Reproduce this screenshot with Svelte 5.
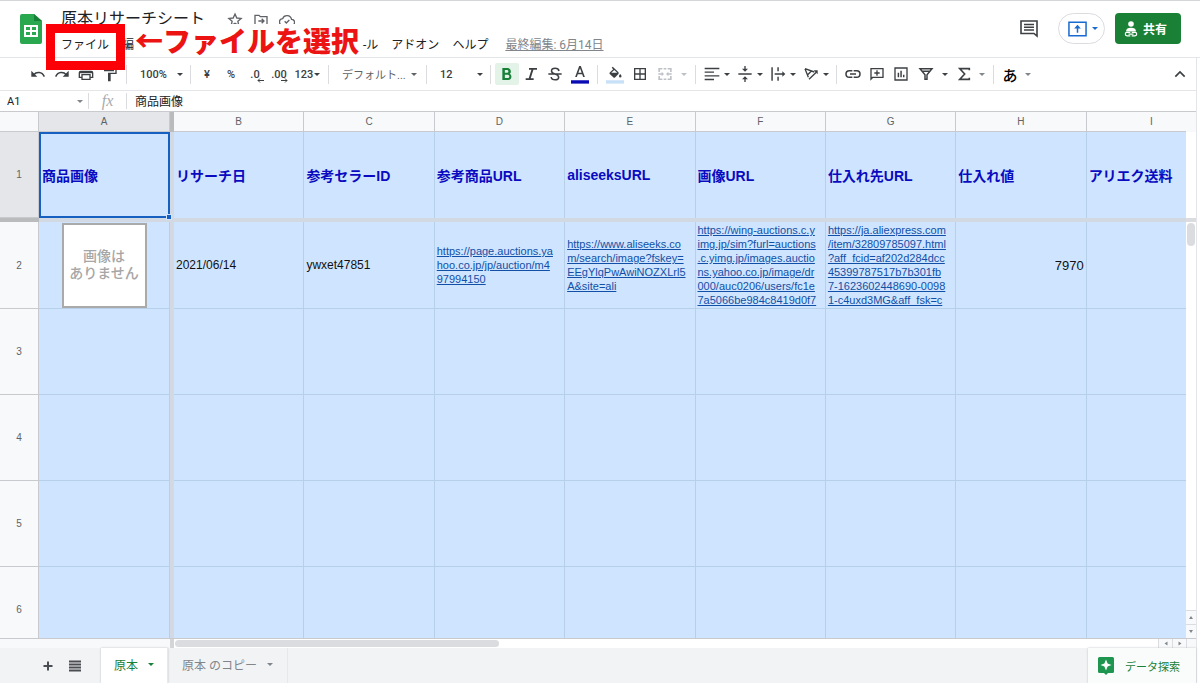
<script lang="ts">
  type Tool = { id: string; label: string; kind?: string; text?: string; caret?: boolean; on?: boolean };

  // toolbar groups, separated by a thin rule
  const groups: Tool[][] = [
    [
      { id: "undo", label: "元に戻す" },
      { id: "redo", label: "やり直し" },
      { id: "print", label: "印刷" },
      { id: "paint", label: "書式を貼り付け" },
    ],
    [{ id: "zoom", label: "ズーム", kind: "pick", text: "100%", caret: true }],
    [
      { id: "yen", label: "通貨の表示形式", text: "¥" },
      { id: "percent", label: "パーセント", text: "%" },
      { id: "less", label: "小数点以下の桁数を減らす", kind: "dec", text: ".0" },
      { id: "more", label: "小数点以下の桁数を増やす", kind: "dec", text: ".00" },
      { id: "format", label: "表示形式の詳細", kind: "num", text: "123", caret: true },
    ],
    [{ id: "font", label: "フォント", kind: "font", text: "デフォルト...", caret: true }],
    [{ id: "size", label: "フォントサイズ", kind: "pick", text: "12", caret: true }],
    [
      { id: "bold", label: "太字", on: true },
      { id: "italic", label: "斜体" },
      { id: "strike", label: "取り消し線" },
      { id: "color", label: "テキストの色", kind: "ink" },
    ],
    [
      { id: "fill", label: "塗りつぶしの色", kind: "ink" },
      { id: "borders", label: "枠線" },
      { id: "merge", label: "セルを結合", kind: "wide off", caret: true },
    ],
    [
      { id: "align", label: "水平方向の配置", kind: "drop", caret: true },
      { id: "valign", label: "垂直方向の配置", kind: "drop", caret: true },
      { id: "wrap", label: "テキストを折り返す", kind: "drop", caret: true },
      { id: "rotate", label: "テキストの回転", kind: "drop", caret: true },
    ],
    [
      { id: "link", label: "リンクを挿入" },
      { id: "comment", label: "コメントを挿入" },
      { id: "chart", label: "グラフを挿入" },
      { id: "filter", label: "フィルタを作成", kind: "wide", caret: true },
      { id: "sum", label: "関数", kind: "mid", caret: true },
    ],
    [{ id: "ime", label: "入力ツール", kind: "mid ime", text: "あ", caret: true }],
  ];

  const letters = ["B", "C", "D", "E", "F", "G", "H", "I"];
  const heads = ["リサーチ日", "参考セラーID", "参考商品URL", "aliseeksURL", "画像URL", "仕入れ先URL", "仕入れ値", "アリエク送料"];

  const item: { text: string; kind?: string }[] = [
    { text: "2021/06/14" },
    { text: "ywxet47851" },
    { kind: "link", text: "https://page.auctions.ya\nhoo.co.jp/jp/auction/m4\n97994150" },
    { kind: "link", text: "https://www.aliseeks.co\nm/search/image?fskey=\nEEgYlqPwAwiNOZXLrl5\nA&site=ali" },
    {
      kind: "link",
      text: "https://wing-auctions.c.y\nimg.jp/sim?furl=auctions\n.c.yimg.jp/images.auctio\nns.yahoo.co.jp/image/dr\n000/auc0206/users/fc1e\n7a5066be984c8419d0f7",
    },
    {
      kind: "link",
      text: "https://ja.aliexpress.com\n/item/32809785097.html\n?aff_fcid=af202d284dcc\n45399787517b7b301fb\n7-1623602448690-0098\n1-c4uxd3MG&aff_fsk=c",
    },
    { kind: "price", text: "7970" },
    { text: "" },
  ];

  const emptyRows = [3, 4, 5, 6];

  let title = $state("原本リサーチシート");
  let cellName = $state("A1");
  let formula = $state("商品画像");
</script>

{#snippet icon(id: string)}
  <svg class="ico" viewBox="0 0 24 24" fill="currentColor" aria-hidden="true">
    {#if id === "undo"}
      <path d="M2 7v9h9z" />
      <path fill="none" stroke="currentColor" stroke-width="2.200" d="M5.500 13c4-4.500 12.500-5 16 3" />
    {:else if id === "redo"}
      <path d="M22 7v9h-9z" />
      <path fill="none" stroke="currentColor" stroke-width="2.200" d="M18.500 13c-4-4.500-12.500-5-16 3" />
    {:else if id === "print"}
      <path d="M20 7H4a3 3 0 0 0-3 3v8h4v3h14v-3h4v-8a3 3 0 0 0-3-3zm-3 12H7v-5h10zm4-3h-2v-4H5v4H3v-5h18zM19 2H5v4h14z" />
    {:else if id === "paint"}
      <path d="M18 4V2H3v6h15V6h2v4H9v13h4V12h9V4z" />
    {:else if id === "bold"}
      <path d="M16 11.700c1-.7 1.800-1.900 1.800-3.200C17.800 5.500 15.800 3 13 3H5v18h9c2.800 0 4.600-2.200 4.600-4.900 0-2-1-3.600-2.600-4.400zM8.800 6H12a2 2 0 0 1 0 4.200H8.800zm4.400 12H8.800v-4.700h4.400a2.300 2.300 0 0 1 0 4.700z" />
    {:else if id === "italic"}
      <path d="M9 3v2.600h3.600L8.600 18.400H4V21h12v-2.600h-4.400l4-12.800H21V3z" />
    {:else if id === "strike"}
      <path fill="none" stroke="currentColor" stroke-width="2.300" d="M2 12h20M18 7.500C17.500 5 15.500 3.500 12.200 3.500 9 3.500 6.800 5 6.800 7.500c0 2.500 2 3.500 5.200 4.500s5.500 2 5.500 4.700-2.300 4-5.300 4c-3.200 0-5.700-1.700-5.900-4.200" />
    {:else if id === "color"}
      <path d="M10.900 0 5.500 14.500h2.300L9.100 11h5.800l1.300 3.500h2.300L13.100 0zM9.800 9 12 2.900 14.200 9z" />
      <path fill="#0b0bb4" d="M0 19h24v4.500H0z" />
    {:else if id === "fill"}
      <path d="M16 7.500 9 1 7.600 2.400l2 2-4.600 4.200c-.6.6-.6 1.400 0 2l5 4.600c.6.500 1.400.5 2 0l4.600-4.600c.6-.600.5-2.600-.6-3.100zM7 9l4-3.600L15 9zM19 10.500s-1.700 2-1.700 3.100a1.700 1.700 0 0 0 3.400 0c0-1.100-1.700-3.100-1.700-3.100z" />
      <path fill="#c9e1f8" d="M0 19h24v4.500H0z" />
    {:else if id === "borders"}
      <path d="M3 3v18h18V3zm8 16H5v-6h6zm0-8H5V5h6zm8 8h-6v-6h6zm0-8h-6V5h6z" />
    {:else if id === "merge"}
      <path d="M2 3h6v2.400H4.400V9H2zM10 3h4v2.400h-4zM16 3h6v6h-2.400V5.400H16zM2 15h2.400v3.600H8V21H2zM10 18.600h4V21h-4zM19.600 15H22v6h-6v-2.400h3.600zM2 11h5V8.500l3.500 3.500L7 15.500V13H2zM22 11h-5V8.500L13.500 12l3.500 3.500V13h5z" />
    {:else if id === "align"}
      <path d="M1 2.500h22v2.200H1zM1 8.100h14v2.200H1zM1 13.700h22v2.200H1zM1 19.300h14v2.200H1z" />
    {:else if id === "valign"}
      <path d="M11 0h2v4h3.500L12 8.500 7.500 4H11zM2 11h20v2H2zM7.500 20 12 15.500l4.500 4.500H13v4h-2v-4z" />
    {:else if id === "wrap"}
      <path d="M2 2h2.200v20H2zM11 2h2.200v6H11zM11 16h2.200v6H11zM7 11h11.500V8l4.500 4-4.500 4v-3H7z" />
    {:else if id === "rotate"}
      <path fill="none" stroke="currentColor" stroke-width="2" d="M3 4l14 5M3 4l5 13M7 13l6-6M9 20 20 9.500" />
      <path d="M22 6.500v6l-6-6z" />
    {:else if id === "link"}
      <path fill="none" stroke="currentColor" stroke-width="2.300" d="M11 7H6.500a5 5 0 0 0 0 10H11M13 7h4.500a5 5 0 0 1 0 10H13M7.500 12h9" />
    {:else if id === "comment"}
      <path d="M2 3v19l4-4h16V3zm18 13H5l-1 1V5h16zM11 6.500h2v3h3v2h-3v3h-2v-3H8v-2h3z" />
    {:else if id === "chart"}
      <path d="M2 2v20h20V2zm18 18H4V4h16zM7 10h2.200v7H7zM11 7h2.200v10H11zM15 13h2.200v4H15z" />
    {:else if id === "filter"}
      <path fill="none" stroke="currentColor" stroke-width="2.200" d="M3 4h18l-7.500 9v7h-3v-7zM6 8h12" />
    {:else if id === "sum"}
      <path fill="none" stroke="currentColor" stroke-width="2.400" d="M20 6.500V4H5.500l7.500 8-7.500 8H20v-2.500" />
    {/if}
  </svg>
{/snippet}

<div class="page">
  <header>
    <svg class="logo" viewBox="0 0 22 30" aria-hidden="true">
      <path fill="#2aa84f" d="M2 0h12l8 7v21a2 2 0 0 1-2 2H2a2 2 0 0 1-2-2V2a2 2 0 0 1 2-2z" />
      <path fill="#178038" d="M14 0l8 7h-8z" />
      <path fill="#fff" d="M4 11h14v12H4zm2 2v3h4v-3zm6 0v3h4v-3zm-6 5v3h4v-3zm6 0v3h4v-3z" />
    </svg>

    <div class="doc">
      <div class="doc-title">
        <input class="name" aria-label="名前を変更" bind:value={title} />
        <button type="button" aria-label="スターを付ける">
          <svg viewBox="0 0 24 24" fill="none" stroke="currentColor" stroke-width="2"><path d="m12 3 2.700 6 6.500.6-4.900 4.300 1.400 6.400-5.700-3.300-5.700 3.300 1.400-6.400-4.900-4.300 6.500-.6z" /></svg>
        </button>
        <button type="button" aria-label="移動">
          <svg viewBox="0 0 24 24" fill="none" stroke="currentColor" stroke-width="2"><path d="M3 20V5h6l2 2h10v13zM8 13.500h8M13 10l3.500 3.500L13 17" /></svg>
        </button>
        <button type="button" aria-label="ドキュメントの状況">
          <svg viewBox="0 0 24 24" fill="none" stroke="currentColor" stroke-width="2"><path d="M6 20a5 5 0 0 1-.6-10A7 7 0 0 1 18.800 11 4.500 4.500 0 0 1 19 20zM8.500 14l2.500 2.500 4.500-4.500" /></svg>
        </button>
      </div>
      <nav>
        <button type="button">ファイル</button>
        <button type="button">編</button>
        <button type="button" class="after">-ル</button>
        <button type="button">アドオン</button>
        <button type="button">ヘルプ</button>
        <a href="#history">最終編集: 6月14日</a>
      </nav>
    </div>

    <div class="actions">
      <button type="button" class="notes" aria-label="コメント履歴を開く">
        <svg viewBox="0 0 18 18" fill="none" stroke="currentColor" stroke-width="1.600"><path d="M1 1h16v15l-3-2.500H1zM4 4.500h10M4 7.300h10M4 10h10" /></svg>
      </button>
      <button type="button" class="present" aria-label="会議で画面を共有">
        <svg viewBox="0 0 20 16" fill="none" stroke="currentColor" stroke-width="1.600"><path d="M1 1h18v14H1zM10 12V6" /><path fill="currentColor" stroke="none" d="m10 3.500 3.500 4h-7z" /></svg>
        <i class="caret"></i>
      </button>
      <button type="button" class="share">
        <svg viewBox="0 0 14 16" aria-hidden="true">
          <circle cx="7" cy="3" r="2.800" fill="currentColor" />
          <path fill="currentColor" d="M2 10.500c0-2.800 2-3.800 5-3.800s5 1 5 3.800z" />
          <path fill="#1a8036" stroke="currentColor" stroke-width="1.200" d="M6.300 11.400H3a1.700 1.700 0 0 0 0 3.400h3.300M7.700 11.400H11a1.700 1.700 0 0 1 0 3.400H7.700M4.500 13.100h5" />
        </svg>
        共有
      </button>
    </div>

    <div class="frame"></div>
    <div class="callout">←ファイルを選択</div>
  </header>

  <div class="work">
    <div class="toolbar" role="toolbar" aria-label="ツールバー">
      {#each groups as group, i (i)}
        {#if i > 0}<span class="sep"></span>{/if}
        {#each group as t (t.id)}
          <button type="button" class="tool {t.kind ?? ''}" class:on={t.on} aria-label={t.label}>
            {#if t.text}
              <span>{t.text}</span>
            {:else}
              {@render icon(t.id)}
            {/if}
            {#if t.kind === "dec"}
              <svg class="arrow" viewBox="0 0 7 5" fill="none" stroke="currentColor" aria-hidden="true">
                <path d={t.id === "less" ? "M7 2.500H1M3 .5l-2 2 2 2" : "M0 2.500h6M4 .5l2 2-2 2"} />
              </svg>
            {/if}
            {#if t.caret}<i class="caret"></i>{/if}
          </button>
        {/each}
      {/each}
      <button type="button" class="tool hide" aria-label="メニューを非表示">
        <svg class="ico" viewBox="0 0 24 24" fill="none" stroke="currentColor" stroke-width="2.500"><path d="m5 16 7-7 7 7" /></svg>
      </button>
    </div>

    <div class="formula">
      <input class="cell-name" aria-label="名前ボックス" bind:value={cellName} />
      <i class="caret small"></i>
      <span class="rule"></span>
      <label for="fx">fx</label>
      <span class="rule"></span>
      <input id="fx" bind:value={formula} />
    </div>

    <div class="grid">
      <div class="sheet">
        <table>
          <colgroup>
            <col class="c-num" />
            <col class="c-first" />
            <col class="c-freeze" />
            {#each letters as l (l)}<col />{/each}
          </colgroup>
          <thead>
            <tr>
              <th></th>
              <th class="sel">A</th>
              <th class="fz"></th>
              {#each letters as l (l)}<th>{l}</th>{/each}
            </tr>
          </thead>
          <tbody>
            <tr class="titles">
              <th class="sel">1</th>
              <td class="active">商品画像</td>
              <td class="fz"></td>
              {#each heads as h (h)}<td>{h}</td>{/each}
            </tr>
            <tr class="freeze">
              <th></th>
              <td colspan="10"></td>
            </tr>
            <tr class="item">
              <th>2</th>
              <td class="pic"><div class="noimage">画像は<br />ありません</div></td>
              <td class="fz"></td>
              {#each item as c, i (i)}
                <td class={c.kind}>
                  {#if c.kind === "link"}<a href="#item">{c.text}</a>{:else}{c.text}{/if}
                </td>
              {/each}
            </tr>
            {#each emptyRows as n (n)}
              <tr>
                <th>{n}</th>
                <td></td>
                <td class="fz"></td>
                {#each letters as l (l)}<td></td>{/each}
              </tr>
            {/each}
          </tbody>
        </table>
      </div>
      <div class="vscroll">
        <div class="vtop"></div>
        <div class="vfreeze"></div>
        <div class="vthumb"></div>
        <button type="button" class="step" aria-label="上へスクロール"><i class="tri up"></i></button>
        <button type="button" class="step" aria-label="下へスクロール"><i class="tri"></i></button>
      </div>
    </div>

    <div class="hscroll">
      <div class="hleft"></div>
      <div class="track"><div class="hthumb"></div></div>
      <button type="button" class="step" aria-label="左へスクロール"><i class="tri left"></i></button>
      <button type="button" class="step" aria-label="右へスクロール"><i class="tri right"></i></button>
      <div class="corner"></div>
    </div>

    <footer>
      <button type="button" class="plain" aria-label="シートを追加">
        <svg viewBox="0 0 12 12" fill="none" stroke="currentColor" stroke-width="2"><path d="M6 1.500v9M1.500 6h9" /></svg>
      </button>
      <button type="button" class="plain" aria-label="すべてのシート">
        <svg viewBox="0 0 12 12" fill="none" stroke="currentColor" stroke-width="2"><path d="M0 1.500h12M0 4.500h12M0 7.500h12M0 10.500h12" /></svg>
      </button>
      <button type="button" class="tab current">原本<i class="caret"></i></button>
      <button type="button" class="tab">原本 のコピー<i class="caret"></i></button>
      <button type="button" class="explore">
        <svg viewBox="0 0 16 18" aria-hidden="true">
          <path fill="#1e9650" d="M1.500 0h13A1.500 1.500 0 0 1 16 1.500v13a1.500 1.500 0 0 1-1.500 1.500H10l-2 2-2-2H1.500A1.500 1.500 0 0 1 0 14.500v-13A1.500 1.500 0 0 1 1.500 0z" />
          <path fill="#fff" d="m8 2.500 1.600 3.900L13.500 8 9.600 9.600 8 13.500 6.400 9.600 2.500 8l3.900-1.600z" />
        </svg>
        データ探索
      </button>
    </footer>
  </div>
</div>

<style>
  :global(body) {
    margin: 0;
    background: #fff;
  }
  .page {
    display: flex;
    flex-direction: column;
    height: 100vh;
    overflow: hidden;
    font-family: Roboto, "Noto Sans CJK JP", sans-serif;
    font-size: 12px;
    color: #3c4043;
  }
  .page * {
    box-sizing: border-box;
  }
  button,
  input {
    font: inherit;
    color: inherit;
    border: 0;
    padding: 0;
    margin: 0;
    background: transparent;
  }
  button {
    cursor: pointer;
    white-space: nowrap;
  }
  input {
    outline: 0;
    min-width: 0;
  }
  .caret {
    flex: none;
    border: 3px solid transparent;
    border-top-color: currentColor;
    border-bottom: 0;
  }
  .caret.small {
    color: #80868b;
  }

  header {
    position: relative;
    flex: none;
    display: flex;
    align-items: flex-start;
    height: 58px;
    border-top: 1px solid #d5d6da;
    border-bottom: 1px solid #e3e5e8;
  }
  .logo {
    flex: none;
    width: 22px;
    height: 30px;
    margin: 13px 19px 0 20px;
  }
  .doc {
    flex: 1;
    padding-top: 5px;
  }
  .doc-title {
    display: flex;
    align-items: center;
    gap: 10px;
    height: 22px;
  }
  .doc-title button {
    width: 16px;
    height: 16px;
    margin-top: 5px;
    color: #5f6368;
  }
  .doc-title svg {
    display: block;
    width: 16px;
    height: 16px;
  }
  .name {
    width: 156px;
    height: 22px;
    font-size: 16px;
    color: #202124;
  }
  nav {
    display: flex;
    align-items: center;
    gap: 13px;
    height: 20px;
    margin-top: 5px;
    color: #202124;
  }
  nav a {
    margin-left: 4px;
    color: #80868b;
  }
  /* leaves room for the callout */
  .after {
    margin-left: 216px;
  }
  .actions {
    display: flex;
    align-items: center;
    padding: 12px 19px 0 0;
  }
  .actions svg {
    display: block;
  }
  .notes svg {
    width: 18px;
    height: 18px;
  }
  .present {
    display: flex;
    align-items: center;
    gap: 5px;
    height: 31px;
    margin: 0 10px 0 20px;
    padding: 0 6px 0 9px;
    border: 1px solid #dadce0;
    border-radius: 16px;
    color: #1a6bd0;
  }
  .present svg {
    width: 19px;
    height: 16px;
  }
  .share {
    display: flex;
    align-items: center;
    gap: 5px;
    height: 31px;
    padding: 0 14px 0 9px;
    border-radius: 4px;
    background: #1a8036;
    color: #fff;
    font-weight: 700;
  }
  .share svg {
    width: 14px;
    height: 16px;
  }
  /* tutorial marks laid over the menu bar */
  .frame {
    position: absolute;
    z-index: 3;
    left: 46px;
    top: 23px;
    width: 79px;
    height: 46px;
    border: 9px solid #fb0007;
  }
  .callout {
    position: absolute;
    z-index: 2;
    left: 135px;
    top: 23px;
    height: 32px;
    background: #fff;
    color: #ec1313;
    font: 900 28px/32px "Noto Sans CJK JP", sans-serif;
    white-space: nowrap;
  }

  .work {
    flex: 1;
    min-height: 0;
    display: flex;
    flex-direction: column;
    margin-right: 3px;
    border-right: 1px solid #e3e5e8;
  }
  .toolbar {
    flex: none;
    display: flex;
    align-items: center;
    height: 33px;
    padding: 0 4px 0 26px;
    border-bottom: 1px solid #e3e5e8;
    font-size: 11px;
    font-weight: 500;
  }
  .sep {
    flex: none;
    width: 1px;
    height: 19px;
    margin: 0 4px;
    background: #dadce0;
  }
  .tool {
    position: relative;
    flex: none;
    display: flex;
    align-items: center;
    justify-content: center;
    width: 24px;
    height: 22px;
    border-radius: 2px;
  }
  .ico {
    flex: none;
    width: 16px;
    height: 16px;
  }
  .on {
    background: #e3f3e8;
    color: #188038;
  }
  .ink {
    width: 26px;
    padding-top: 2px;
  }
  .ink .ico {
    width: 18px;
    height: 18px;
  }
  .pick,
  .font {
    justify-content: space-between;
    width: 55px;
    padding: 0 3px 0 9px;
  }
  .font {
    width: 89px;
    padding: 0 5px 0 9px;
    color: #5f6368;
    font-weight: 400;
  }
  .num {
    width: 33px;
    gap: 1px;
  }
  .arrow {
    position: absolute;
    right: 3px;
    bottom: 2px;
    width: 7px;
    height: 5px;
  }
  .drop {
    width: 33px;
    gap: 4px;
  }
  .wide {
    width: 39px;
    gap: 8px;
  }
  .mid {
    width: 37px;
    gap: 7px;
  }
  .off {
    color: #bdc1c6;
  }
  .ime {
    color: #000;
    font-size: 15px;
  }
  .mid .caret {
    color: #80868b;
  }
  .hide {
    margin-left: auto;
  }

  .formula {
    flex: none;
    display: flex;
    align-items: center;
    height: 21px;
    border-bottom: 1px solid #c8cacd;
  }
  .cell-name {
    width: 77px;
    padding-left: 7px;
    font-size: 11px;
    color: #202124;
  }
  .rule {
    width: 1px;
    height: 16px;
    background: #dadce0;
  }
  .caret + .rule {
    margin-left: 5px;
  }
  .formula label {
    width: 37px;
    text-align: center;
    font: italic 16px/18px "Liberation Serif", serif;
    color: #a8abaf;
  }
  #fx {
    flex: 1;
    height: 20px;
    padding: 0 0 2px 8px;
    color: #202124;
  }

  .grid {
    flex: 1;
    min-height: 0;
    display: flex;
  }
  .sheet {
    flex: 1;
    min-width: 0;
    overflow: hidden;
  }
  /* the last column runs under the scroll bar */
  table {
    width: calc(100% + 31px);
    table-layout: fixed;
    border-collapse: separate;
    border-spacing: 0;
    font-family: "Liberation Sans", "Noto Sans CJK JP", sans-serif;
  }
  .c-num {
    width: 39px;
  }
  .c-first {
    width: 131px;
  }
  .c-freeze {
    width: 4px;
  }
  th {
    padding: 0;
    border: 0 solid #c8cacd;
    border-width: 0 1px 1px 0;
    background: #f8f9fa;
    font-size: 10px;
    font-weight: 400;
    color: #5f6368;
  }
  thead th {
    height: 20px;
  }
  td {
    height: 86px;
    padding: 0 2px;
    border: 0 solid #b5d0e8;
    border-width: 0 1px 1px 0;
    background: #cfe5ff;
    color: #111;
    vertical-align: middle;
  }
  .item td {
    height: 87px;
  }
  th.sel {
    background: #e4e6ea;
  }
  .fz {
    padding: 0;
    border: 0;
    background: #d2d9e3;
  }
  th.fz {
    background: #b9bbbd;
  }
  .titles td {
    border-bottom: 0;
    color: #0a0ac0;
    font-size: 14px;
    font-weight: 700;
    white-space: nowrap;
  }
  .titles .active {
    position: relative;
    border: 2px solid #1560c0;
    padding: 0 1px;
  }
  .active::after {
    content: "";
    position: absolute;
    right: -4px;
    bottom: -4px;
    width: 6px;
    height: 6px;
    border: 1px solid #cfe5ff;
    background: #1560c0;
    box-sizing: border-box;
  }
  .freeze th,
  .freeze td {
    height: 4px;
    padding: 0;
    border: 0;
    background: #b9bbbd;
  }
  .freeze td {
    background: #d2d9e3;
  }
  td.pic {
    padding: 0;
  }
  .noimage {
    display: flex;
    align-items: center;
    justify-content: center;
    width: 85px;
    height: 85px;
    margin: 0 auto;
    border: 2px solid #aaa;
    background: #fff;
    color: #a6a6a6;
    font-size: 14px;
    font-weight: 500;
    line-height: 17px;
    text-align: center;
  }
  .link a {
    display: block;
    color: #124fa6;
    font-size: 11px;
    line-height: 14px;
    white-space: pre;
  }
  .price {
    font-size: 13px;
    text-align: right;
  }

  .vscroll {
    flex: none;
    display: flex;
    flex-direction: column;
    width: 10px;
    background: #fff;
  }
  .vtop {
    height: 106px;
    background: linear-gradient(#f8f9fa 20px, #fff 20px);
  }
  .vfreeze {
    height: 4px;
    background: #dadce0;
  }
  .vthumb {
    width: 8px;
    height: 23px;
    margin: 1px 1px auto;
    border-radius: 4px;
    background: #dadce0;
  }
  .step {
    flex: none;
    display: flex;
    align-items: center;
    justify-content: center;
    background: #f8f9fa;
  }
  .vscroll .step {
    height: 14px;
    border-top: 1px solid #dadce0;
  }
  .tri {
    border: 2px solid transparent;
    border-top: 3px solid #80868b;
    border-bottom: 0;
  }
  .up {
    transform: rotate(180deg);
  }
  .left {
    transform: rotate(90deg);
  }
  .right {
    transform: rotate(-90deg);
  }
  .hscroll {
    flex: none;
    display: flex;
    height: 10px;
    border-top: 1px solid #c8cacd;
  }
  .hleft {
    width: 174px;
    border-right: 4px solid #d3d5d9;
    background: #f8f9fa;
  }
  .track {
    flex: 1;
    padding: 1px;
  }
  .hthumb {
    width: 33%;
    height: 7px;
    border-radius: 4px;
    background: #dadce0;
  }
  .hscroll .step {
    width: 14px;
    border-left: 1px solid #dadce0;
  }
  .corner {
    width: 10px;
    background: #f8f9fa;
    border-left: 1px solid #dadce0;
  }

  footer {
    flex: none;
    display: flex;
    height: 35px;
    padding-left: 34px;
    background: #f1f3f4;
    color: #5f6368;
  }
  footer svg {
    display: block;
    margin: 0 auto;
  }
  .plain {
    width: 27px;
    color: #4a4d51;
  }
  .plain svg {
    width: 12px;
    height: 12px;
  }
  .tab {
    display: flex;
    align-items: center;
    gap: 10px;
    padding: 0 14px 2px;
    border-right: 1px solid #e6e8ea;
    color: #80868b;
  }
  .current {
    margin-left: 13px;
    padding: 0 13px 2px;
    background: #fff;
    box-shadow: 0 0 2px #bdc1c6;
    color: #188038;
  }
  .explore {
    display: flex;
    align-items: center;
    gap: 11px;
    margin-left: auto;
    padding: 0 16px 0 10px;
    background: #fafbfb;
    box-shadow: 0 0 2px #bdc1c6;
    color: #188038;
    font-size: 11px;
  }
  .explore svg {
    width: 16px;
    height: 18px;
  }
</style>
